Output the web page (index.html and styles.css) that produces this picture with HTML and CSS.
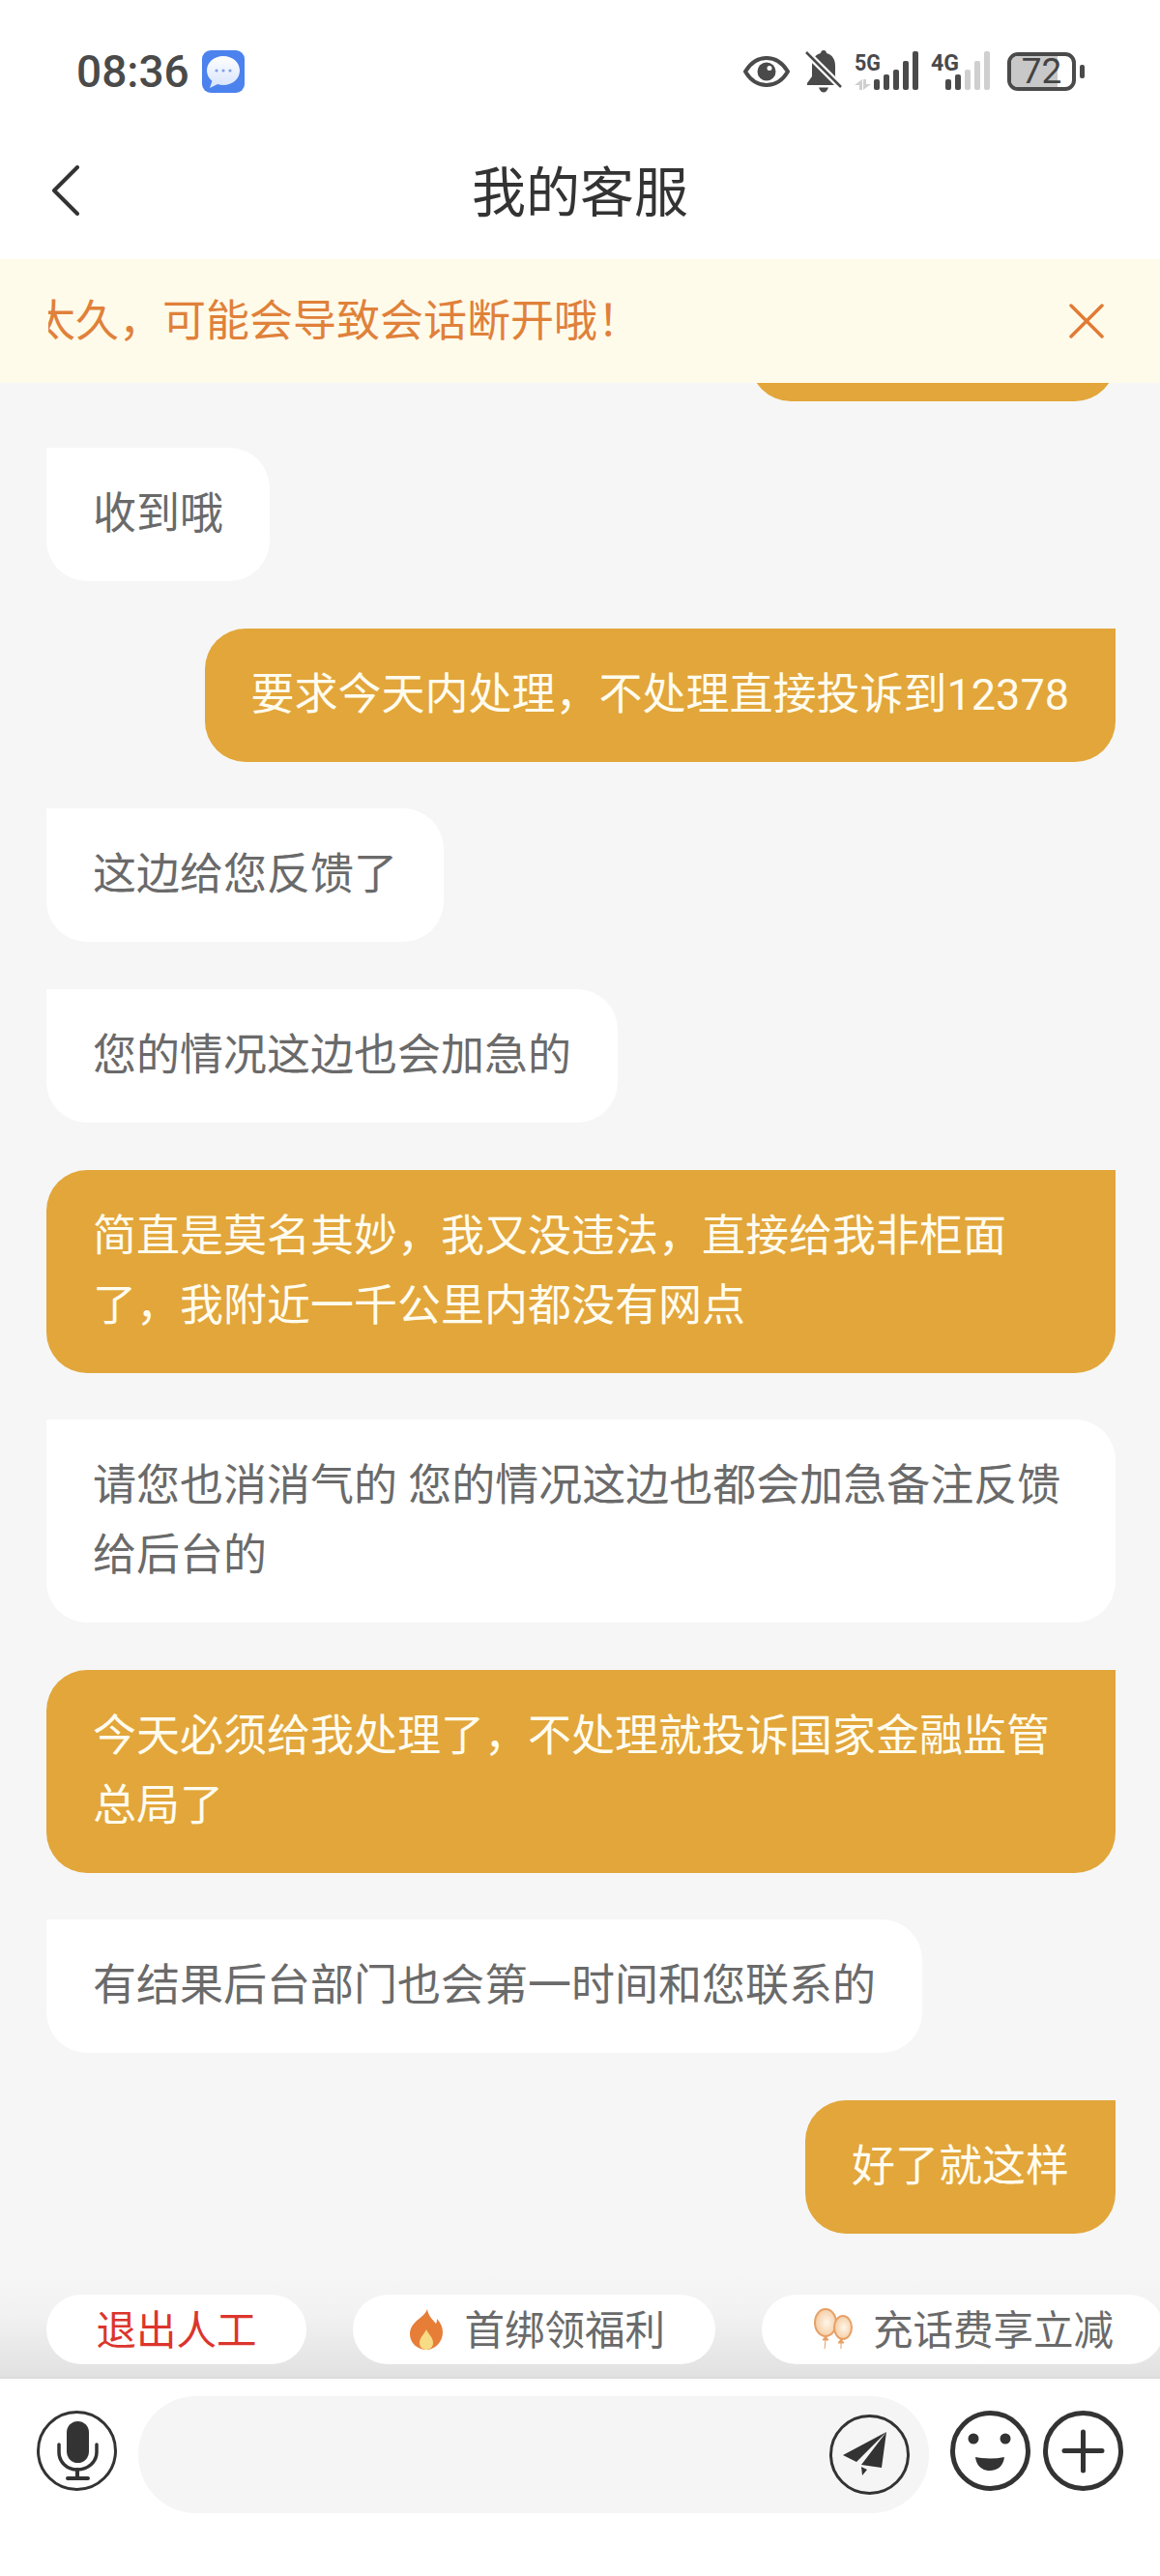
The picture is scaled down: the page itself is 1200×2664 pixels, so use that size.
FILE: index.html
```html
<!DOCTYPE html>
<html lang="zh-CN">
<head>
    <meta charset="UTF-8">
    <meta name="viewport" content="width=device-width, initial-scale=1.0">
    <title>我的客服</title>
    <link rel="stylesheet" href="styles.css">
</head>
<body>
    <div class="phone">
        <div class="status">
            <span class="time">08:36</span>
            <svg class="msg-icon" width="44" height="44" viewBox="0 0 44 44">
                <defs>
                    <linearGradient id="bubbleFill" x1="0" y1="0" x2="0" y2="1">
                        <stop offset="0" stop-color="#ffffff"/>
                        <stop offset="1" stop-color="#d6e3fb"/>
                    </linearGradient>
                </defs>
                <rect width="44" height="44" rx="9" fill="#4c82ee"/>
                <path d="M22 6c9.500 0 17 6.600 17 15s-7.500 15-17 15c-2 0-4-.3-5.800-.9L8 39l2.400-7.300C7 29 5 25.300 5 21 5 12.600 12.500 6 22 6z" fill="url(#bubbleFill)"/>
                <circle cx="15" cy="21" r="1.600" fill="#7fa3ea"/>
                <circle cx="22" cy="21" r="1.600" fill="#7fa3ea"/>
                <circle cx="29" cy="21" r="1.600" fill="#7fa3ea"/>
            </svg>
            <div class="status-right">
                <svg class="eye" width="48" height="32" viewBox="0 0 48 32">
                    <path d="M2 16C8 6 15 2 24 2s16 4 22 14c-6 10-13 14-22 14S8 26 2 16z" fill="none" stroke="#4a4a4a" stroke-width="4" stroke-linejoin="round"/>
                    <circle cx="24" cy="16" r="9.500" fill="#4a4a4a"/>
                    <circle cx="27" cy="12.500" r="2.500" fill="#fff"/>
                </svg>
                <svg class="bell" width="38" height="44" viewBox="0 0 38 44">
                    <path d="M19 0c2 0 3 1.500 3 3 6 1.500 9 6.500 9 13v11l5 7v2H2v-2l5-7V16C7 9.500 10 4.500 16 3c0-1.500 1-3 3-3z" fill="#4a4a4a"/>
                    <path d="M14 38.500h10c-1 3-3 5-5 5s-4-2-5-5z" fill="#4a4a4a"/>
                    <path d="M1 2l36 36" stroke="#fff" stroke-width="7"/>
                    <path d="M1 2l36 36" stroke="#4a4a4a" stroke-width="2.500"/>
                </svg>
                <svg class="signal-five" width="67" height="50" viewBox="0 -4 67 50">
                    <text x="0" y="20" class="net-label" textLength="27" lengthAdjust="spacingAndGlyphs">5G</text>
                    <path d="M8 29v11H5v-5H0zM9 29h3v5h5l-8 6z" fill="#cfcfcf"/>
                    <rect x="20" y="29" width="6" height="11" rx="2" fill="#4a4a4a"/>
                    <rect x="30" y="24" width="6" height="16" rx="2" fill="#4a4a4a"/>
                    <rect x="40" y="19" width="6" height="21" rx="2" fill="#4a4a4a"/>
                    <rect x="50" y="10" width="6" height="30" rx="2" fill="#4a4a4a"/>
                    <rect x="60" y="0" width="6" height="40" rx="2" fill="#4a4a4a"/>
                </svg>
                <svg class="signal-four" width="62" height="50" viewBox="0 -4 62 50">
                    <text x="0" y="20" class="net-label" textLength="29" lengthAdjust="spacingAndGlyphs">4G</text>
                    <rect x="15" y="29" width="6" height="11" rx="2" fill="#4a4a4a"/>
                    <rect x="25" y="24" width="6" height="16" rx="2" fill="#4a4a4a"/>
                    <rect x="35" y="19" width="6" height="21" rx="2" fill="#cfcfcf"/>
                    <rect x="45" y="10" width="6" height="30" rx="2" fill="#cfcfcf"/>
                    <rect x="55" y="0" width="6" height="40" rx="2" fill="#cfcfcf"/>
                </svg>
                <div class="battery">
                    <div class="battery-fill"></div>
                    <span class="battery-num">72</span>
                </div>
                <div class="battery-nub"></div>
            </div>
        </div>

        <div class="header">
            <svg class="back" width="28" height="52" viewBox="0 0 28 52">
                <polyline points="26,2 2,26 26,50" fill="none" stroke="#333" stroke-width="4" stroke-linecap="round" stroke-linejoin="round"/>
            </svg>
            <h1 class="title">我的客服</h1>
            <span></span>
        </div>

        <div class="notice">
            <div class="notice-track">
                <div class="notice-text">太久，可能会导致会话断开哦！</div>
            </div>
            <svg class="notice-close" width="36" height="36" viewBox="0 0 36 36">
                <path d="M2 2l32 32M34 2L2 34" stroke="#e07b35" stroke-width="3.500" stroke-linecap="round"/>
            </svg>
        </div>

        <div class="messages">
            <div class="bubble user cut-off"></div>
            <div class="bubble agent">收到哦</div>
            <div class="bubble user">要求今天内处理，不处理直接投诉到12378</div>
            <div class="bubble agent">这边给您反馈了</div>
            <div class="bubble agent">您的情况这边也会加急的</div>
            <div class="bubble user">简直是莫名其妙，我又没违法，直接给我非柜面了，我附近一千公里内都没有网点</div>
            <div class="bubble agent">请您也消消气的 您的情况这边也都会加急备注反馈给后台的</div>
            <div class="bubble user">今天必须给我处理了，不处理就投诉国家金融监管总局了</div>
            <div class="bubble agent">有结果后台部门也会第一时间和您联系的</div>
            <div class="bubble user">好了就这样</div>
        </div>

        <div class="chips">
            <div class="chip chip-exit"><span class="chip-label">退出人工</span></div>
            <div class="chip">
                <svg width="48" height="42" viewBox="-6 0 48 42">
                    <path d="M19 0c1 7 5 10 9 15 1-2 1-3 1-5 4 4 6 9 6 14 0 10-8 18-17 18S1 35 1 26c0-6 3-10 6-13 4-4 10-7 12-13z" fill="#e67e38"/>
                    <path d="M18 21c2 5 7 8 7 14 0 4-3 7-7 7s-7-3-7-7c0-6 5-9 7-14z" fill="#f8dc85"/>
                </svg>
                <span class="chip-label">首绑领福利</span>
            </div>
            <div class="chip">
                <svg width="48" height="44" viewBox="0 0 48 44">
                    <defs>
                        <radialGradient id="balloonFill" cx="0.55" cy="0.5" r="0.6">
                            <stop offset="0" stop-color="#fff6ea"/>
                            <stop offset="1" stop-color="#f3c79a"/>
                        </radialGradient>
                    </defs>
                    <ellipse cx="15" cy="15" rx="11" ry="14" fill="url(#balloonFill)" stroke="#e6a066" stroke-width="2"/>
                    <path d="M15 29l-3 4h6zM15 33l-1 9" fill="#e6a066" stroke="#e6a066" stroke-width="1"/>
                    <ellipse cx="33" cy="20" rx="9" ry="12" fill="url(#balloonFill)" stroke="#e6a066" stroke-width="2"/>
                    <path d="M31 32l-3 4h6zM31 36v6" fill="#e6a066" stroke="#e6a066" stroke-width="1"/>
                </svg>
                <span class="chip-label">充话费享立减</span>
            </div>
        </div>

        <div class="input-bar">
            <svg class="tool" width="83" height="83" viewBox="0 0 83 83">
                <circle cx="41.500" cy="41.500" r="40" fill="none" stroke="#333" stroke-width="3"/>
                <rect x="31" y="11" width="23" height="43" rx="11.500" fill="#333"/>
                <path d="M23 35v8c0 10 8 18 19 18s20-8 20-18v-8" fill="none" stroke="#333" stroke-width="3.500" stroke-linecap="round"/>
                <path d="M42 61v8M32 70h21" fill="none" stroke="#333" stroke-width="4" stroke-linecap="round"/>
            </svg>
            <div class="input-box">
                <svg width="83" height="83" viewBox="0 0 83 83">
                    <circle cx="41.500" cy="41.500" r="40" fill="none" stroke="#333" stroke-width="3"/>
                    <path d="M59 18L14 42l14 7zM59 18L33 52l21 3zM33 54l6 3-5 6z" fill="#333"/>
                </svg>
            </div>
            <svg class="tool" width="83" height="83" viewBox="0 0 83 83">
                <circle cx="41.500" cy="41.500" r="39" fill="none" stroke="#333" stroke-width="5"/>
                <circle cx="24" cy="29" r="5.500" fill="#333"/>
                <circle cx="57" cy="29" r="5.500" fill="#333"/>
                <path d="M26 48q15 3 30 0c-1 9-7 14-15 14s-14-5-15-14z" fill="#333"/>
            </svg>
            <svg class="tool tool-plus" width="83" height="83" viewBox="0 0 83 83">
                <circle cx="41.500" cy="41.500" r="39" fill="none" stroke="#333" stroke-width="5"/>
                <path d="M41.500 22v40M22 41.500h39" stroke="#333" stroke-width="5" stroke-linecap="round"/>
            </svg>
        </div>
    </div>
</body>
</html>
```

FILE: styles.css
```css
* {
    box-sizing: border-box;
}
body {
    margin: 0;
    background: #fff;
    font-family: Roboto, "Noto Sans CJK SC", sans-serif;
}
.phone {
    width: 1200px;
    height: 2664px;
    display: flex;
    flex-direction: column;
    overflow: hidden;
    background: #f6f6f6;
}

/* status bar */
.status {
    height: 126px;
    flex: none;
    padding: 48px 78px 0 79px;
    display: flex;
    align-items: flex-start;
    background: #fff;
}
.time {
    font-size: 46px;
    font-weight: 500;
    line-height: 52px;
    color: #4a4a4a;
}
.msg-icon {
    margin: 4px 0 0 13px;
}
.status-right {
    margin-left: auto;
    height: 52px;
    display: flex;
    align-items: center;
}
.eye {
    margin-right: 16px;
}
.bell {
    margin-right: 13px;
}
.signal-five {
    margin-right: 12px;
}
.signal-four {
    margin-right: 17px;
}
.net-label {
    font-family: Roboto, sans-serif;
    font-size: 24px;
    font-weight: 700;
    fill: #4a4a4a;
}
.battery {
    position: relative;
    width: 71px;
    height: 40px;
    border: 4px solid #4a4a4a;
    border-radius: 11px;
}
.battery-fill {
    width: 48px;
    height: 100%;
    border-radius: 7px 0 0 7px;
    background: #c8c8c8;
}
.battery-num {
    position: absolute;
    top: -6px;
    left: 0;
    width: 100%;
    text-align: center;
    font-size: 37px;
    line-height: 44px;
    color: #444;
}
.battery-nub {
    width: 5px;
    height: 14px;
    margin-left: 4px;
    border-radius: 2px;
    background: #4a4a4a;
}

/* header */
.header {
    height: 142px;
    flex: none;
    padding: 0 54px;
    display: grid;
    grid-template-columns: 1fr auto 1fr;
    align-items: center;
    background: #fff;
}
.title {
    margin: 0;
    padding-bottom: 6px;
    font-size: 56px;
    font-weight: 400;
    color: #333;
}

/* notice */
.notice {
    height: 128px;
    flex: none;
    padding: 0 50px;
    display: flex;
    align-items: center;
    background: #fffbea;
}
.notice-track {
    flex: 1;
    overflow: hidden;
}
.notice-text {
    margin-left: -17px;
    padding-bottom: 7px;
    font-size: 45px;
    white-space: nowrap;
    color: #e0813a;
}
.notice-close {
    flex: none;
    margin-right: 8px;
}

/* messages */
.messages {
    flex: 1;
    min-height: 0;
    padding: 0 46px 40px 48px;
    display: flex;
    flex-direction: column;
    justify-content: flex-end;
    gap: 48.6px;
    overflow: hidden;
}
.bubble {
    flex: none;
    max-width: 1106px;
    padding: 33px 48px;
    border-radius: 42px;
    font-size: 45px;
    line-height: 72px;
}
.agent {
    align-self: flex-start;
    border-top-left-radius: 0;
    background: #fff;
    color: #6a6a6a;
}
.user {
    align-self: flex-end;
    border-top-right-radius: 0;
    background: #e2a63a;
    color: #fffcef;
}
.cut-off {
    width: 378px;
    height: 138px;
}

/* quick reply chips */
.chips {
    height: 108px;
    flex: none;
    padding: 23px 0 0 48px;
    display: flex;
    align-items: flex-start;
    gap: 48px;
    overflow: hidden;
    background: linear-gradient(#f6f6f6, #f2f2f2 40%, #e1e1e1);
}
.chip {
    height: 72px;
    flex: none;
    padding: 0 51.5px;
    display: flex;
    align-items: center;
    gap: 16px;
    border-radius: 36px;
    background: #fff;
    font-size: 41.5px;
    color: #6a6a6a;
}
.chip-label {
    padding-bottom: 5px;
}
.chip-exit {
    color: #dc352c;
}

/* input bar */
.input-bar {
    height: 206px;
    flex: none;
    padding: 18px 0 0 38px;
    display: flex;
    align-items: flex-start;
    gap: 22px;
    border-top: 2px solid #dcdcdc;
    background: #fff;
}
.tool {
    flex: none;
    margin-top: 15px;
}
.tool-plus {
    margin-left: -9px;
}
.input-box {
    width: 818px;
    height: 121px;
    padding-right: 20px;
    display: flex;
    align-items: center;
    justify-content: flex-end;
    border-radius: 60px;
    background: #f5f5f5;
}
```
